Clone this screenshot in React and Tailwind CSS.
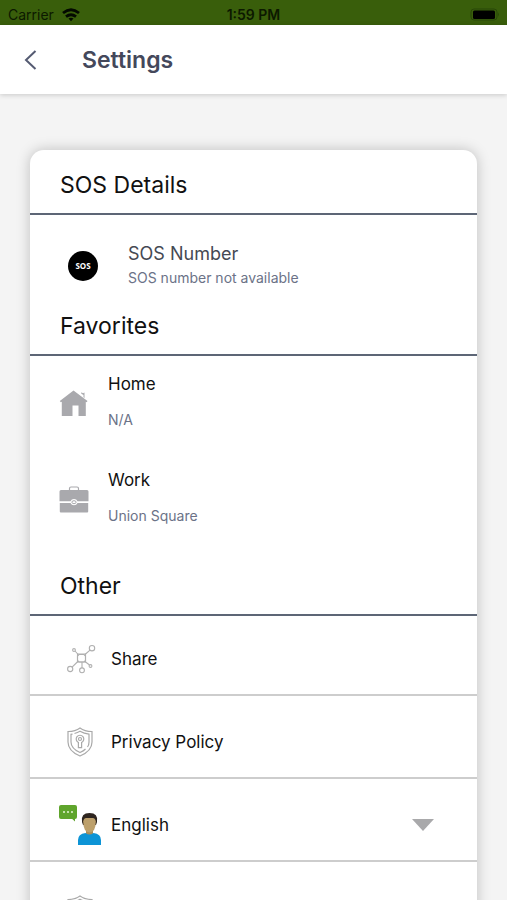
import React, { useState } from 'react';

const HomeIcon = () => (
    <svg viewBox="0 0 30 30" className="h-[30px] w-[30px] shrink-0" fill="#a9a9ad">
        <path d="M14.500 1.500 28.500 12l-.8 1.200-.9-.5V27h-7.300V16.500h-6V27H2.800V12.700l-1 .6L.8 12z" />
        <path d="M22.300 3.300l1.700 1 1.500-.8v5.500l-1-.8V6l-2.200-1.200z" />
    </svg>
);

const WorkIcon = () => (
    <svg viewBox="0 0 30 30" className="h-[30px] w-[30px] shrink-0">
        <path d="M10.500 5V3.500Q10.500 2 12 2h6q1.500 0 1.500 1.500V5" fill="none" stroke="#a9a9ad" strokeWidth="1.200" />
        <path d="M2 5h26q1.500 0 1.500 1.500v9.800h-11q-1-2.300-3.500-2.300t-3.500 2.300H.5V6.500Q.5 5 2 5z" fill="#a9a9ad" />
        <path d="M.8 18h10.700q1 2.200 3.500 2.200t3.500-2.200h10.700v8.500q0 1-1 1H1.800q-1 0-1-1z" fill="#a9a9ad" />
        <ellipse cx="15" cy="17.200" rx="2.100" ry="1.500" fill="none" stroke="#a9a9ad" />
    </svg>
);

const ShareIcon = () => (
    <svg viewBox="0 0 30 30" className="h-[30px] w-[30px]" fill="none" stroke="#b0b0b0" strokeWidth="1.100">
        <path d="M13 10.500h5l1.500 1.500v4.500l-1.500 1.500h-5l-1.500-1.500V12z" />
        <path d="M11.500 10h8v8h-8z" />
        <circle cx="26" cy="4.200" r="2.700" />
        <circle cx="8" cy="6" r="1.400" />
        <circle cx="4.200" cy="25" r="2.600" />
        <circle cx="16" cy="26.300" r="2.400" />
        <circle cx="24.500" cy="22" r="1.400" />
        <path d="M9 7l3.200 3.500M19 10.500l5-4.400M11.800 17.500l-5.700 5.700M16 18v5.900M19 17.500l4.500 3.500" />
    </svg>
);

const ShieldIcon = () => (
    <svg viewBox="0 0 30 30" className="h-[30px] w-[30px]" fill="none" stroke="#a9a9a9" strokeWidth="1.200">
        <path d="M14 1q4.500 3.500 12 3.500v10.500q0 9-12 14Q2 24 2 15V4.500Q9.500 4.500 14 1z" />
        <path d="M8.500 6.500q3-.8 5.500-2.300 4 2.300 9 3V15q0 3-1.500 5M19.500 22q-2 2-5.500 3.500Q5 21.500 5 15V7.300l1.500-.2" />
        <path d="M12.400 15.500v5.200h3.200v-5.200a3.800 3.800 0 1 0-3.200 0z" />
        <circle cx="14" cy="12" r="1.500" />
    </svg>
);

const LanguageIcon = () => (
    <svg viewBox="0 0 44 42" className="h-[42px] w-[44px]">
        <path d="M3 1h14q2 0 2 2v10q0 2-2 2v2.500L14.200 15H3q-2 0-2-2V3q0-2 2-2z" fill="#5fa52c" />
        <g fill="#e5f5d5">
            <circle cx="6" cy="8" r="1" />
            <circle cx="10" cy="8" r="1" />
            <circle cx="14" cy="8" r="1" />
        </g>
        <path d="M28 25h7v7h-7z" fill="#a88d5b" />
        <path d="M20 41v-5q0-6 7.500-7 4 3 8 0 7.500 1 7.500 7v5z" fill="#0d94d6" />
        <path d="M24 18q-1.500-9 7.500-9t7.500 9l-1 3H25z" fill="#2e251f" />
        <path d="M25.200 17.500q.5-3.500 3-3.500h6.600q2.500 0 3 3.500 0 10.500-6.300 11-6.300-.5-6.300-11z" fill="#bda06b" />
    </svg>
);

const StatusBar = () => (
    <div className="grid h-[25px] shrink-0 grid-cols-3 items-center bg-[#395e0b] px-2 pt-1 text-[14px] leading-5 text-[#0c1900]">
        <div className="flex items-center gap-2">
            <span>Carrier</span>
            <svg viewBox="0 0 18 14" className="h-[14px] w-[18px]" fill="none" stroke="#030900" strokeWidth="2.800">
                <path d="M1 5q8-6.500 16 0M4 8.700q5-4 10 0" />
                <path d="M6.500 10.600q2.500-1.800 5 0L9 13.300z" fill="#030900" stroke="none" />
            </svg>
        </div>
        <span className="text-center font-semibold">1:59 PM</span>
        <svg viewBox="0 0 30 14" className="h-[14px] w-[30px] justify-self-end">
            <rect x="2" y="1" width="26" height="11" rx="3" fill="none" stroke="#294708" />
            <rect x="4" y="2.500" width="22" height="8.500" rx="1.500" fill="#000" />
            <path d="M29 4.500q1.500 2 0 4z" fill="#294708" />
        </svg>
    </div>
);

const SectionTitle = ({ children }) => (
    <h2 className="border-b-2 border-[#5d6676] px-[30px] pt-3 pb-3 text-[23px] leading-8 text-[#111]">{children}</h2>
);

const Favorite = ({ icon: Icon, title, place }) => (
    <div className="flex h-24 items-center gap-[19px] px-[29px]">
        <Icon />
        <div className="pb-1">
            <p className="text-[17px] leading-7 text-[#111]">{title}</p>
            <p className="pt-2 text-[14px] leading-7 text-[#6b7287]">{place}</p>
        </div>
    </div>
);

const favorites = [
    { title: 'Home', place: 'N/A', icon: HomeIcon },
    { title: 'Work', place: 'Union Square', icon: WorkIcon },
];

const App = () => {
    const [language, setLanguage] = useState('English');

    return (
        <div className="flex h-screen flex-col overflow-hidden bg-[#f4f4f4] font-['Inter',sans-serif]">
            <StatusBar />
            <header className="z-10 flex h-[69px] shrink-0 items-center bg-white pl-5 shadow-[0_1px_5px_rgba(0,0,0,0.18)]">
                <button type="button" aria-label="Back" className="w-[62px]">
                    <svg viewBox="0 0 22 22" className="h-[22px] w-[22px]" fill="none" stroke="#555b72" strokeWidth="2">
                        <path d="M15.500 2 6 11l9.500 9" />
                    </svg>
                </button>
                <h1 className="text-[23px] leading-8 font-semibold text-[#44485b]">Settings</h1>
            </header>

            <main className="flex-1 overflow-y-auto px-[30px] pt-14 [scrollbar-width:none]">
                <div className="rounded-t-[14px] bg-white pt-[7px] shadow-[0_0_14px_rgba(0,0,0,0.22)]">
                    <section>
                        <SectionTitle>SOS Details</SectionTitle>
                        <div className="flex h-[83px] items-center gap-[30px] pt-[18px] pl-[38px]">
                            <span className="flex h-[30px] w-[30px] items-center justify-center rounded-full bg-black font-['Open_Sans',sans-serif] text-[8px] font-bold text-white">SOS</span>
                            <div>
                                <p className="text-[18px] leading-6 text-[#454953]">SOS Number</p>
                                <p className="text-[14px] leading-6 text-[#6b7287]">SOS number not available</p>
                            </div>
                        </div>
                    </section>

                    <section className="pb-[10px]">
                        <SectionTitle>Favorites</SectionTitle>
                        {favorites.map(f => <Favorite key={f.title} {...f} />)}
                    </section>

                    <section>
                        <SectionTitle>Other</SectionTitle>
                        <ul className="text-[17px] leading-6 text-[#111]">
                            <li className="flex h-20 items-end border-b-2 border-[#cdcdcd] pb-5">
                                <button type="button" className="flex items-center pl-9">
                                    <span className="w-[45px]"><ShareIcon /></span>
                                    Share
                                </button>
                            </li>
                            <li className="flex h-[83px] items-end border-b-2 border-[#cdcdcd] pb-5">
                                <button type="button" className="flex items-center pl-9">
                                    <span className="w-[45px]"><ShieldIcon /></span>
                                    Privacy Policy
                                </button>
                            </li>
                            <li className="flex h-[83px] items-end border-b-2 border-[#cdcdcd] pb-[14px]">
                                <label className="flex w-full items-center pr-[42px] pl-7">
                                    <span className="w-[53px]"><LanguageIcon /></span>
                                    <select
                                        aria-label="Language"
                                        value={language}
                                        onChange={e => setLanguage(e.target.value)}
                                        className="flex-1 appearance-none bg-transparent outline-none"
                                    >
                                        <option>English</option>
                                    </select>
                                    <svg viewBox="0 0 24 14" className="pointer-events-none h-[14px] w-6" fill="#a9a9ab">
                                        <path d="M1 1h22L12 13z" />
                                    </svg>
                                </label>
                            </li>
                            <li className="flex h-[83px] items-end pb-5">
                                <button type="button" aria-label="Terms" className="pl-9">
                                    <ShieldIcon />
                                </button>
                            </li>
                        </ul>
                    </section>
                </div>
            </main>
        </div>
    );
};

export default App;
